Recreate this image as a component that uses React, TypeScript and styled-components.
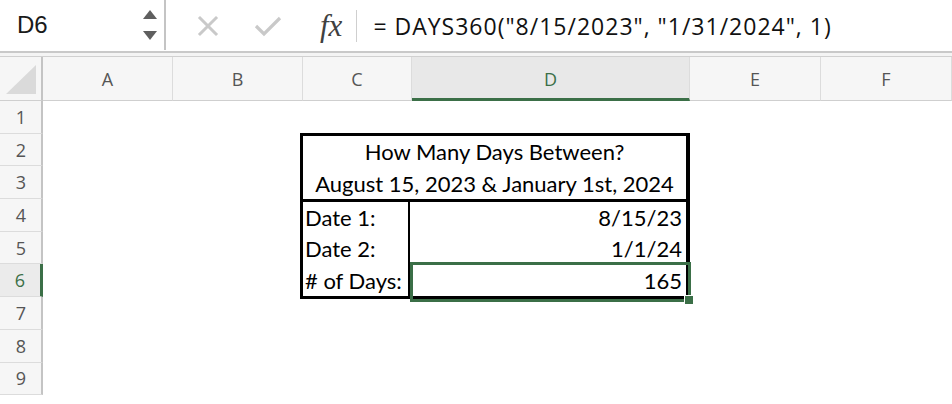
import React from "react";
import styled, { createGlobalStyle } from "styled-components";

const Global = createGlobalStyle`
  html, body { margin: 0; padding: 0; background: #ffffff; }
  body { width: 952px; height: 404px; overflow: hidden; font-family: "Liberation Sans", Arial, sans-serif; }
`;

const GREEN = "#3b6f47";
const COLS = "43px 130px 130px 109px 278px 131px 131px";
const ROW_H = 32.7;

const Page = styled.div`
  width: 952px;
  height: 404px;
  display: flex;
  flex-direction: column;
  background: #fff;
  overflow: hidden;
`;

const TopBar = styled.div`
  height: 51px;
  display: flex;
  align-items: stretch;
  border-bottom: 2px solid #c9c9c9;
  box-sizing: content-box;
`;

const NameBox = styled.div`
  width: 166px;
  height: 50px;
  border-right: 2px solid #c4c4c4;
  display: flex;
  align-items: center;
  justify-content: space-between;
  padding: 0 7px 0 17px;
  box-sizing: border-box;
  font-family: "Liberation Sans", Arial, sans-serif;
  font-size: 24px;
  color: #1a1a1a;
`;

const Spinner = styled.div`
  display: flex;
  flex-direction: column;
  gap: 12px;
  align-items: center;
`;

const Tri = styled.div<{ $down?: boolean }>`
  width: 0;
  height: 0;
  border-left: 7.5px solid transparent;
  border-right: 7.5px solid transparent;
  ${(p) => (p.$down ? "border-top: 9px solid #5f5f5f;" : "border-bottom: 9px solid #5f5f5f;")}
`;

const Actions = styled.div`
  display: flex;
  align-items: center;
  padding-left: 31px;
  gap: 35px;
`;

const Fx = styled.div`
  font-family: "Liberation Serif", "Times New Roman", serif;
  font-style: italic;
  font-size: 31px;
  color: #404040;
  margin-left: 3px;
  padding-right: 14px;
  border-right: 1px solid #cfcfcf;
  height: 32px;
  display: flex;
  align-items: center;
`;

const Formula = styled.div`
  display: flex;
  align-items: center;
  padding-left: 16px;
  font-family: "Open Sans", sans-serif;
  font-size: 23px;
  color: #111;
  letter-spacing: 1px;
`;

const Gap = styled.div`
  height: 3px;
  background: #f4f4f4;
  border-bottom: 1px solid #d0d0d0;
`;

const HeaderRow = styled.div`
  display: grid;
  grid-template-columns: ${COLS};
  height: 44px;
`;

const ColHead = styled.div<{ $active?: boolean }>`
  background: ${(p) => (p.$active ? "#e8e8e8" : "#f6f6f6")};
  border-right: 1px solid #dcdcdc;
  border-bottom: ${(p) => (p.$active ? `3px solid ${GREEN}` : "1px solid #cfcfcf")};
  display: flex;
  align-items: center;
  justify-content: center;
  font-family: "Open Sans", sans-serif;
  font-size: 18px;
  color: ${(p) => (p.$active ? GREEN : "#555")};
  box-sizing: border-box;
  padding-top: ${(p) => (p.$active ? "2px" : "0")};
`;

const Corner = styled.div`
  background: #f6f6f6;
  border-right: 2px solid #c4c4c4;
  border-bottom: 1px solid #cfcfcf;
  box-sizing: border-box;
  display: flex;
  align-items: flex-end;
  justify-content: flex-end;
  padding: 0 5px 6px 0;
`;

const CornerTri = styled.div`
  width: 0;
  height: 0;
  border-left: 30px solid transparent;
  border-bottom: 29px solid #dadada;
`;

const Body = styled.div`
  display: grid;
  grid-template-columns: ${COLS};
  grid-auto-rows: ${ROW_H}px;
`;

const RowHead = styled.div<{ $r: number; $active?: boolean }>`
  grid-column: 1;
  grid-row: ${(p) => p.$r};
  background: ${(p) => (p.$active ? "#ebebeb" : "#f6f6f6")};
  border-right: ${(p) => (p.$active ? `3px solid ${GREEN}` : "2px solid #c4c4c4")};
  border-bottom: 1px solid #dcdcdc;
  box-sizing: border-box;
  display: flex;
  align-items: center;
  justify-content: center;
  padding-left: ${(p) => (p.$active ? "0" : "1px")};
  font-family: "Open Sans", sans-serif;
  font-size: 18px;
  color: ${(p) => (p.$active ? GREEN : "#555")};
`;

const Table = styled.div`
  grid-column: 4 / 6;
  grid-row: 2 / 7;
  margin: -1px 0 -2px -3px;
  border: 3px solid #000;
  border-right-width: 4px;
  display: grid;
  grid-template-columns: 107px 1fr;
  grid-template-rows: 1fr 1fr 3px 1fr 1fr 1fr;
  font-family: "Lato", sans-serif;
  font-size: 22px;
  color: #000;
  position: relative;
  z-index: 1;
`;

const Title = styled.div`
  grid-column: 1 / 3;
  display: flex;
  align-items: center;
  justify-content: center;
  padding-top: 1px;
`;

const Rule = styled.div`
  grid-column: 1 / 3;
  background: #000;
`;

const Label = styled.div`
  border-right: 2px solid #000;
  display: flex;
  align-items: center;
  padding-left: 2px;
  white-space: nowrap;
`;

const Value = styled.div`
  display: flex;
  align-items: center;
  justify-content: flex-end;
  padding-right: 4px;
`;

const Selection = styled.div`
  grid-column: 5;
  grid-row: 6;
  margin: -2px -1px -5px -2px;
  border: 3px solid ${GREEN};
  position: relative;
  z-index: 2;
  pointer-events: none;
`;

const Handle = styled.span`
  position: absolute;
  right: -5px;
  bottom: -5px;
  width: 8px;
  height: 8px;
  background: ${GREEN};
  border-left: 1px solid #fff;
  border-top: 1px solid #fff;
`;

const XIcon = () => (
  <svg width="22" height="22" viewBox="0 0 22 22">
    <path d="M3 3 L19 19 M19 3 L3 19" stroke="#c9c9c9" strokeWidth="3" strokeLinecap="square" />
  </svg>
);

const CheckIcon = () => (
  <svg width="28" height="22" viewBox="0 0 28 22">
    <path d="M2 11 L10 19 L26 3" stroke="#c9c9c9" strokeWidth="3.2" fill="none" />
  </svg>
);

const letters = ["A", "B", "C", "D", "E", "F"];

export default function App() {
  return (
    <Page>
      <Global />
      <TopBar>
        <NameBox>
          <span>D6</span>
          <Spinner>
            <Tri />
            <Tri $down />
          </Spinner>
        </NameBox>
        <Actions>
          <XIcon />
          <CheckIcon />
          <Fx>fx</Fx>
        </Actions>
        <Formula>= DAYS360("8/15/2023", "1/31/2024", 1)</Formula>
      </TopBar>
      <Gap />
      <HeaderRow>
        <Corner>
          <CornerTri />
        </Corner>
        {letters.map((l) => (
          <ColHead key={l} $active={l === "D"}>
            {l}
          </ColHead>
        ))}
      </HeaderRow>
      <Body>
        {Array.from({ length: 9 }, (_, i) => (
          <RowHead key={i} $r={i + 1} $active={i === 5}>
            {i + 1}
          </RowHead>
        ))}
        <Table>
          <Title>How Many Days Between?</Title>
          <Title>August 15, 2023 &amp; January 1st, 2024</Title>
          <Rule />
          <Label>Date 1:</Label>
          <Value>8/15/23</Value>
          <Label>Date 2:</Label>
          <Value>1/1/24</Value>
          <Label># of Days:</Label>
          <Value>165</Value>
        </Table>
        <Selection>
          <Handle />
        </Selection>
      </Body>
    </Page>
  );
}
